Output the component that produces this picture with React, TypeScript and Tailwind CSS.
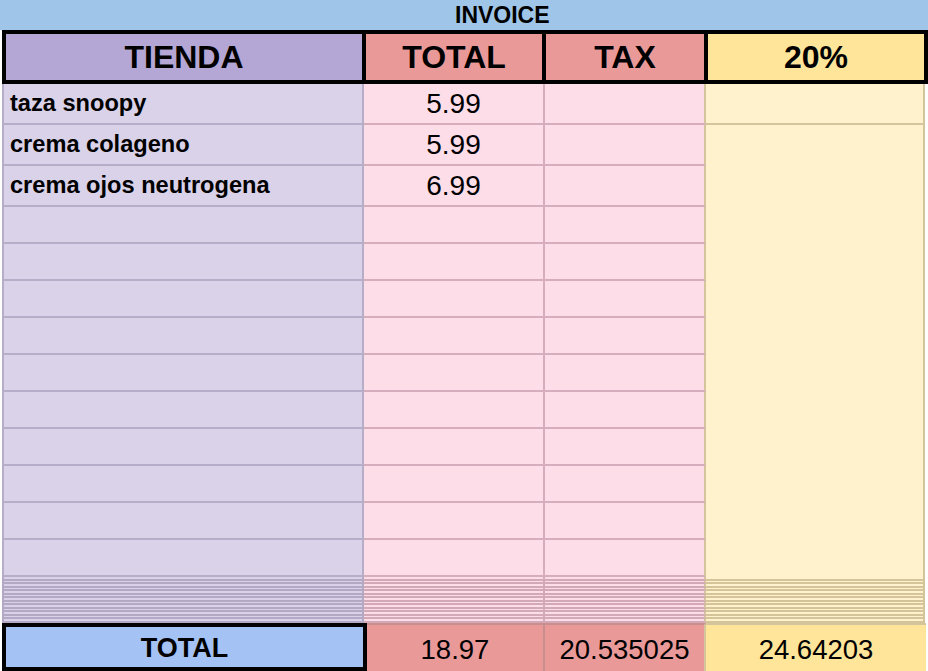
import React from 'react';

// spreadsheet-style invoice sheet
const items = [
  { name: 'taza snoopy', total: '5.99' },
  { name: 'crema colageno', total: '5.99' },
  { name: 'crema ojos neutrogena', total: '6.99' },
];

const emptyRows = Array.from({ length: 10 });
const denseRows = Array.from({ length: 13 });

const purpleCell = 'bg-[#d9d2e9] border-l-2 border-r-2 border-b-2 border-[#b6aec8]';
const pinkCell = 'bg-[#fddde8] border-r-2 border-b-2 border-[#d6adbc]';

export default function App() {
  return (
    <div
      className="w-[928px] h-[671px] overflow-hidden bg-white text-black"
      style={{ fontFamily: '"Liberation Sans", Arial, sans-serif' }}
    >
      {/* title bar */}
      <div className="h-[30px] bg-[#9fc5e8] flex items-center pl-[455px]">
        <span className="text-[23px] font-bold leading-none">INVOICE</span>
      </div>

      {/* header row */}
      <div className="ml-[2px] w-[926px] h-[54px] border-4 border-black flex">
        <div className="w-[360px] border-r-4 border-black bg-[#b4a7d6] flex items-center justify-center text-[32px] font-bold">
          TIENDA
        </div>
        <div className="w-[180px] border-r-4 border-black bg-[#ea9999] flex items-center justify-center text-[32px] font-bold">
          TOTAL
        </div>
        <div className="w-[162px] border-r-4 border-black bg-[#ea9999] flex items-center justify-center text-[32px] font-bold">
          TAX
        </div>
        <div className="w-[216px] bg-[#ffe599] flex items-center justify-center text-[32px] font-bold">
          20%
        </div>
      </div>

      {/* body */}
      <div className="ml-[2px] grid grid-cols-[362px_181px_161px_219px] grid-rows-[41px_41px_41px_repeat(10,37px)]">
        <div className="col-start-4 row-start-1 bg-[#fff2cc] border-r-2 border-b-2 border-[#d5c59d]" />
        <div className="col-start-4 row-start-2 row-span-12 bg-[#fff2cc] border-r-2 border-[#d5c59d]" />
        {items.map((it) => (
          <React.Fragment key={it.name}>
            <div className={`${purpleCell} flex items-center pl-[6px] pt-[1px] text-[23.6px] font-bold`}>{it.name}</div>
            <div className={`${pinkCell} flex items-center justify-center pt-[1px] text-[28px]`}>{it.total}</div>
            <div className={`${pinkCell} border-r-[#d5c59d]`} />
          </React.Fragment>
        ))}
        {emptyRows.map((_, i) => (
          <React.Fragment key={i}>
            <div className={purpleCell} />
            <div className={pinkCell} />
            <div className={`${pinkCell} border-r-[#d5c59d]`} />
          </React.Fragment>
        ))}
      </div>

      {/* squeezed hidden rows */}
      <div className="ml-[2px] flex flex-col">
        {denseRows.map((_, i) => (
          <div key={i} className="flex h-[3.5px]">
            <div className="w-[362px] bg-[#d9d2e9] border-l-2 border-r-2 border-b-2 border-[#b3a9c4]" />
            <div className="w-[181px] bg-[#fddde8] border-r-2 border-b-2 border-[#d3a9b8]" />
            <div className="w-[161px] bg-[#fddde8] border-r-2 border-b-2 border-[#d3a9b8] border-r-[#d5c59d]" />
            <div className="w-[219px] bg-[#fff2cc] border-r-2 border-b-2 border-[#d5c49a]" />
          </div>
        ))}
      </div>

      {/* totals row */}
      <div className="ml-[2px] flex h-[48px] mt-[0.5px]">
        <div className="w-[365px] border-4 border-black bg-[#a4c2f4] flex items-center justify-center pt-[3px] text-[27px] font-bold">
          TOTAL
        </div>
        <div className="w-[178px] bg-[#ea9999] border-t-2 border-r-2 border-[#c98e8e] flex items-center justify-center pt-[3px] text-[27.5px]">
          18.97
        </div>
        <div className="w-[161px] bg-[#ea9999] border-t-2 border-r-2 border-[#c98e8e] border-r-[#d5c59d] flex items-center justify-center pt-[3px] text-[27.5px]">
          20.535025
        </div>
        <div className="w-[220px] bg-[#ffe599] border-t-2 border-[#d5c59d] flex items-center justify-center pt-[3px] text-[27.5px]">
          24.64203
        </div>
      </div>
    </div>
  );
}
